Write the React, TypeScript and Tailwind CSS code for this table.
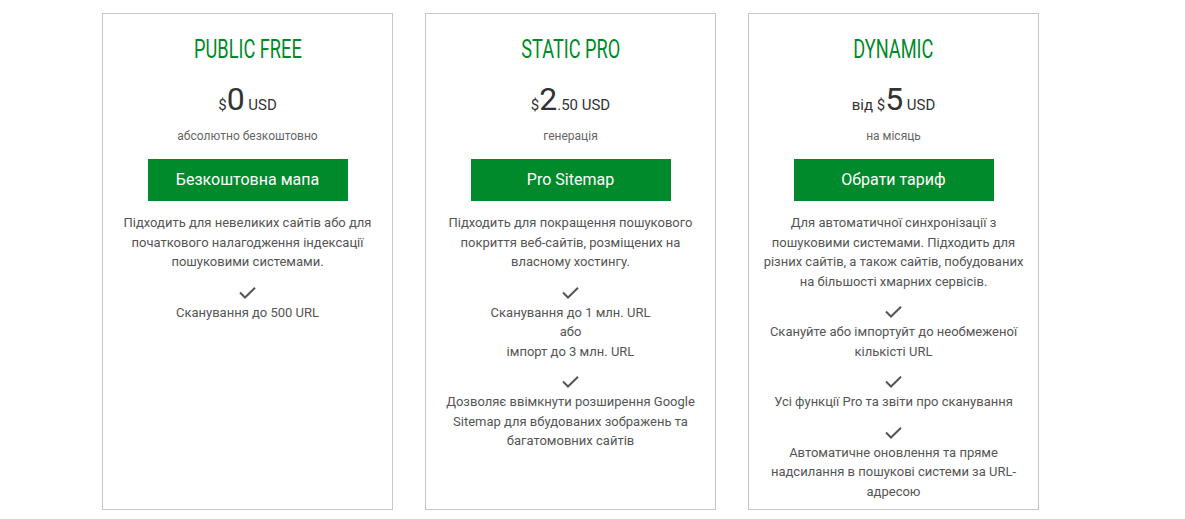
const plans = [
  {
    name: 'PUBLIC FREE',
    prefix: '',
    whole: '0',
    cents: '',
    note: 'абсолютно безкоштовно',
    button: 'Безкоштовна мапа',
    description: 'Підходить для невеликих сайтів або для початкового налагодження індексації пошуковими системами.',
    features: [['Сканування до 500 URL']],
  },
  {
    name: 'STATIC PRO',
    prefix: '',
    whole: '2',
    cents: '.50',
    note: 'генерація',
    button: 'Pro Sitemap',
    description: 'Підходить для покращення пошукового покриття веб-сайтів, розміщених на власному хостингу.',
    features: [
      ['Сканування до 1 млн. URL', 'або', 'імпорт до 3 млн. URL'],
      ['Дозволяє ввімкнути розширення Google Sitemap для вбудованих зображень та багатомовних сайтів'],
    ],
  },
  {
    name: 'DYNAMIC',
    prefix: 'від ',
    whole: '5',
    cents: '',
    note: 'на місяць',
    button: 'Обрати тариф',
    description:
      'Для автоматичної синхронізації з пошуковими системами. Підходить для різних сайтів, а також сайтів, побудованих на більшості хмарних сервісів.',
    features: [
      ['Скануйте або імпортуйт до необмеженої кількісті URL'],
      ['Усі функції Pro та звіти про сканування'],
      ['Автоматичне оновлення та пряме надсилання в пошукові системи за URL-адресою'],
    ],
  },
]

function Check() {
  return (
    <div className="h-[20px] flex items-center justify-center">
      <svg width="17" height="12" viewBox="0 0 17 12" fill="none">
        <polyline points="1,5.5 6,10.5 16,0.8" stroke="#555" strokeWidth="2" />
      </svg>
    </div>
  )
}

export default function App() {
  return (
    <div className="bg-white min-h-[519px] pt-[13px] pl-[102px] font-['Roboto',sans-serif]">
      <div className="flex gap-[32px] items-stretch">
        {plans.map((plan) => (
          <div
            key={plan.name}
            className="w-[291px] border border-[#c6c6c6] px-[12px] pt-[21px] pb-[8px] text-center"
          >
            {/* title */}
            <div className="h-[28px] leading-[28px]">
              <span className="inline-block origin-center scale-x-[0.7] text-[26px] text-[#008a2a] whitespace-nowrap">
                {plan.name}
              </span>
            </div>

            {/* price */}
            <div className="mt-[20px] leading-none text-[#333]">
              {plan.prefix && <span className="text-[15px]">{plan.prefix}</span>}
              <span className="text-[15px]">$</span>
              <span className="text-[32px]">{plan.whole}</span>
              <span className="text-[15px]">{plan.cents} USD</span>
            </div>

            <p className="mt-[13px] text-[12px] leading-[16px] text-[#666]">{plan.note}</p>

            <button className="mx-auto mt-[15px] flex h-[42px] w-[200px] items-center justify-center bg-[#018a2b] text-[16px] font-normal text-white">
              {plan.button}
            </button>

            <p className="mt-[12px] text-[13px] leading-[1.5] text-[#555]">{plan.description}</p>

            {plan.features.map((lines, i) => (
              <div key={i} className="mt-[11px]">
                <Check />
                {lines.map((line) => (
                  <p key={line} className="text-[13px] leading-[1.5] text-[#555]">
                    {line}
                  </p>
                ))}
              </div>
            ))}
          </div>
        ))}
      </div>
    </div>
  )
}
